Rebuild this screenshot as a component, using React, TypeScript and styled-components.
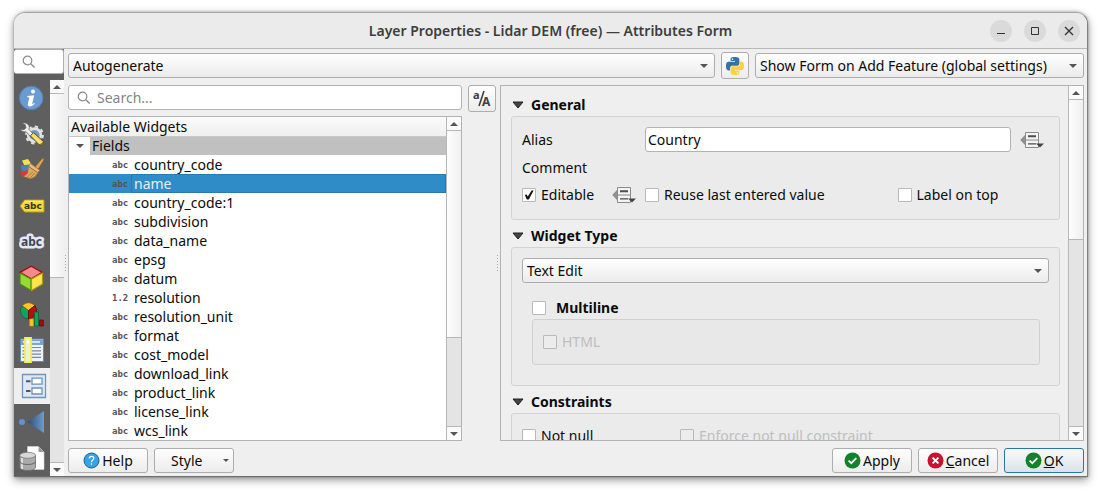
import React from "react";
import styled, { createGlobalStyle, css } from "styled-components";

const GlobalStyle = createGlobalStyle`
  *, *::before, *::after { box-sizing: border-box; }
  body { margin: 0; background: #fff; }
  body, button, input, select {
    font-family: "Noto Sans", "Open Sans", sans-serif;
    font-size: 14px;
    color: #0b0b0b;
  }
  button, select { line-height: 20px; }
`;

/* ---------- shared parts ---------- */

const raised = css`
  border: 1px solid #acaeac;
  border-radius: 3px;
  background: linear-gradient(#fefefe, #ececec);
`;

const Desktop = styled.div`
  height: 100vh;
  padding: 12px 13px 16px 14px;
`;

const Dialog = styled.div`
  height: 100%;
  display: flex;
  flex-direction: column;
  overflow: hidden;
  border-radius: 12px 12px 0 0;
  background: #efefef;
  border: 1px solid #a6a6a6;
  border-right-color: #808080;
  border-bottom-color: #6c6c6c;
  border-left: 0;
  box-shadow: 0 3px 9px rgba(0, 0, 0, 0.42), 0 0 3px rgba(0, 0, 0, 0.3);
`;

const TitleBar = styled.header`
  flex: none;
  height: 36px;
  display: grid;
  grid-template-columns: 1fr auto 1fr;
  align-items: center;
  padding: 0 7px;
  background: #ebebeb;
  border-bottom: 1px solid #b9b9b9;
`;

const Title = styled.h1`
  grid-column: 2;
  margin: 0;
  font-size: 14px;
  line-height: 20px;
  font-weight: 600;
  color: #3d3d3d;
  white-space: nowrap;
`;

const WindowControls = styled.div`
  display: flex;
  justify-content: flex-end;
  gap: 12px;
`;

const WindowButton = styled.button`
  width: 22px;
  height: 22px;
  padding: 0;
  border: 0;
  border-radius: 50%;
  background: #dadada;
  display: grid;
  place-items: center;
`;

const Body = styled.div`
  flex: 1;
  min-height: 0;
  display: flex;
`;

/* ---------- sidebar ---------- */

const Sidebar = styled.aside`
  flex: none;
  width: 50px;
  display: flex;
  flex-direction: column;
  background: #5f5f5f;
`;

const SideSearch = styled.label`
  flex: none;
  height: 25px;
  margin-bottom: 6px;
  display: flex;
  align-items: center;
  gap: 4px;
  padding-left: 8px;
  background: #fff;
  border: 1px solid #b0b0b0;
  border-left: 0;
  border-radius: 3px;
`;

const SideSearchInput = styled.input`
  width: 20px;
  padding: 0;
  border: 0;
  outline: 0;
  background: transparent;
`;

const SideContent = styled.div`
  flex: 1;
  min-height: 0;
  display: flex;
`;

const SideTabs = styled.nav`
  width: 36px;
  display: flex;
  flex-direction: column;
  overflow: hidden;
`;

const SideTab = styled.button<{ $active?: boolean }>`
  flex: none;
  height: 36px;
  padding: 0 0 0 ${(p) => (p.$active ? 4 : 0)}px;
  border: 0;
  display: grid;
  place-items: center;
  background: ${(p) => (p.$active ? "#efefef" : "transparent")};
`;

/* ---------- scrollbar ---------- */

const ScrollTrack = styled.div<{ $border?: boolean }>`
  flex: none;
  width: ${(p) => (p.$border ? 15 : 14)}px;
  display: flex;
  flex-direction: column;
  background: #e4e4e4;
  border-left: ${(p) => (p.$border ? "1px solid #b7b7b7" : "0")};
`;

const ScrollStep = styled.button`
  flex: none;
  height: 13px;
  padding: 0;
  border: 0;
  background: #fafafa;
  display: grid;
  place-items: center;
`;

const ScrollSpace = styled.div`
  flex: 1;
  min-height: 0;
  border-top: 1px solid #b7b7b7;
  border-bottom: 1px solid #b7b7b7;
`;

const ScrollThumb = styled.div<{ $size: number }>`
  height: ${(p) => p.$size}%;
  background: linear-gradient(90deg, #fdfdfd, #f0f0f0);
  border-bottom: 1px solid #b7b7b7;
`;

/* ---------- main area ---------- */

const Main = styled.main`
  flex: 1;
  min-width: 0;
  display: flex;
  flex-direction: column;
  padding: 3px 3px 3px 0;
`;

const TopRow = styled.div`
  flex: none;
  display: flex;
  align-items: center;
  gap: 6px;
  margin-bottom: 6px;
`;

const SelectWrap = styled.div<{ $grow?: boolean; $width?: number }>`
  flex: ${(p) => (p.$grow ? "1" : "none")};
  width: ${(p) => (p.$width ? p.$width + "px" : "auto")};
  min-width: 0;
  display: grid;
  align-items: center;

  & > * { grid-area: 1 / 1; }
  & > svg { justify-self: end; margin-right: 7px; pointer-events: none; }
`;

const Select = styled.select`
  ${raised}
  appearance: none;
  width: 100%;
  height: 25px;
  padding: 0 20px 0 4px;
`;

const IconButton = styled.button`
  ${raised}
  flex: none;
  width: 28px;
  height: 27px;
  padding: 0;
  display: grid;
  place-items: center;
`;

const Columns = styled.div`
  flex: 1;
  min-height: 0;
  display: flex;
`;

const LeftColumn = styled.section`
  flex: 428 1 0;
  min-width: 0;
  display: flex;
  flex-direction: column;
  gap: 4px;
`;

const SearchRow = styled.div`
  flex: none;
  display: flex;
  align-items: flex-start;
  gap: 6px;
`;

const SearchBox = styled.label`
  flex: 1;
  height: 25px;
  display: flex;
  align-items: center;
  gap: 6px;
  padding: 0 8px;
  background: #fff;
  border: 1px solid #b3b3b3;
  border-radius: 3px;
`;

const SearchInput = styled.input`
  flex: 1;
  min-width: 0;
  padding: 0;
  border: 0;
  outline: 0;
  background: transparent;
  &::placeholder { color: #858585; opacity: 1; }
`;

const Tree = styled.div`
  flex: 1;
  min-height: 0;
  margin-right: 34px;
  display: flex;
  background: #fff;
  border: 1px solid #b3b3b3;
`;

const TreeContent = styled.div`
  flex: 1;
  min-width: 0;
  overflow: hidden;
`;

const TreeHeader = styled.div`
  height: 20px;
  padding-left: 2px;
  line-height: 20px;
  background: linear-gradient(#fbfbfb, #efefef);
  border-bottom: 1px solid #c8c8c8;
`;

const TreeGroup = styled.div`
  display: flex;
  align-items: center;
  gap: 6px;
  height: 18px;
  padding-left: 7px;
`;

const TreeGroupLabel = styled.span`
  flex: 1;
  height: 18px;
  padding-left: 2px;
  line-height: 18px;
  background: #c0c0c0;
`;

const TreeList = styled.ul`
  margin: 0;
  padding: 0;
  list-style: none;
`;

const TreeItem = styled.li<{ $selected?: boolean }>`
  height: 19px;
  display: flex;
  align-items: center;
  gap: 3px;
  padding-left: 43px;
  line-height: 19px;
  white-space: nowrap;
  color: ${(p) => (p.$selected ? "#e4f0f8" : "inherit")};
  background: ${(p) => (p.$selected ? "#308cc6" : "transparent")};
`;

const FieldName = styled.span<{ $focused?: boolean }>`
  flex: 1;
  padding-left: 3px;
  box-shadow: ${(p) => (p.$focused ? "inset 0 0 0 1px #2a7ab0" : "none")};
`;

const FieldType = styled.span`
  width: 16px;
  font: bold 9px/16px "DejaVu Sans Mono", monospace;
  color: #545454;
`;

const Splitter = styled.div`
  flex: none;
  width: 4px;
  display: grid;
  place-items: center;
`;

const Panel = styled.section`
  flex: 582 1 0;
  min-width: 0;
  display: flex;
  border: 1px solid #b3b3b3;
`;

const PanelContent = styled.div`
  flex: 1;
  min-width: 0;
  overflow: hidden;
  padding: 8px 8px 0 10px;
`;

const GroupTitle = styled.button`
  display: flex;
  align-items: center;
  gap: 7px;
  width: 100%;
  height: 22px;
  padding: 0 0 0 1px;
  border: 0;
  background: transparent;
  font-weight: 700;
`;

const Group = styled.div`
  margin-bottom: 5px;
  padding: 10px;
  border: 1px solid #d3d3d3;
  border-radius: 3px;
  background: #ebebeb;
`;

const AliasRow = styled.div`
  display: grid;
  grid-template-columns: 123px 1fr 38px;
  align-items: center;
`;

const TextInput = styled.input`
  height: 25px;
  min-width: 0;
  padding: 0 2px;
  border: 1px solid #b3b3b3;
  border-radius: 3px;
  background: #fff;
`;

const CommentRow = styled.div`
  height: 32px;
  line-height: 32px;
`;

const OptionRow = styled.div`
  display: grid;
  grid-template-columns: 90px 33px 5fr 3fr;
  align-items: center;
  height: 22px;
  margin-bottom: 3px;
`;

const OverrideButton = styled.button`
  width: 24px;
  height: 20px;
  padding: 0;
  border: 0;
  background: transparent;
  display: grid;
  place-items: center;
`;

const OverrideCell = styled.div<{ $spaced?: boolean }>`
  display: flex;
  padding-left: ${(p) => (p.$spaced ? 9 : 0)}px;
`;

const CheckLabel = styled.label<{ $disabled?: boolean; $bold?: boolean }>`
  display: flex;
  align-items: center;
  gap: ${(p) => (p.$bold ? 10 : 5)}px;
  line-height: 20px;
  white-space: nowrap;
  font-weight: ${(p) => (p.$bold ? 700 : 400)};
  color: ${(p) => (p.$disabled ? "#bebebe" : "inherit")};
`;

const CheckInput = styled.input`
  appearance: none;
  flex: none;
  width: 14px;
  height: 14px;
  margin: 0;
  border: 1px solid #b9b9b9;
  border-radius: 1px;
  background: #fff;
  display: grid;
  place-items: center;

  &:disabled { background: #ececec; }
  &:checked::after {
    content: "";
    width: 10px;
    height: 10px;
    background: #111;
    clip-path: polygon(8% 48%, 26% 44%, 38% 66%, 76% 4%, 96% 4%, 48% 96%, 28% 96%);
  }
`;

const NestedTitle = styled.div`
  padding: 15px 10px 0;
  height: 36px;
`;

const NestedGroup = styled.div`
  margin: 0 9px 10px 10px;
  padding: 12px 10px;
  height: 46px;
  border: 1px solid #d0d0d0;
  border-radius: 3px;
  background: #e8e8e8;
`;

const ConstraintRow = styled.div`
  display: grid;
  grid-template-columns: 158px 1fr;
  height: 24px;
`;

const Footer = styled.footer`
  flex: none;
  display: flex;
  gap: 6px;
  padding-top: 7px;
`;

const FooterSpace = styled.div`
  flex: 1;
`;

const PushButton = styled.button<{ $primary?: boolean }>`
  ${raised}
  width: 80px;
  height: 25px;
  padding: 0;
  display: flex;
  align-items: center;
  justify-content: center;
  gap: 2px;
  ${(p) =>
    p.$primary &&
    css`
      border-color: #2a76a8;
      background: linear-gradient(#f7fafb, #dbe3e8);
    `}
`;

const MenuButton = styled(PushButton)`
  justify-content: space-between;
  padding: 0 4px 0 16px;
`;

/* ---------- drawings ---------- */

const Arrow = ({ up, small }: { up?: boolean; small?: boolean }) => (
  <svg width={small ? 6 : 8} height={small ? 3 : 4} viewBox="0 0 8 4" aria-hidden="true">
    <path d={up ? "M0 4L4 0L8 4Z" : "M0 0H8L4 4Z"} fill="#555" />
  </svg>
);

const GroupArrow = () => (
  <svg width="12" height="8" viewBox="0 0 12 8" aria-hidden="true">
    <path d="M1 1H11L6 7Z" fill="#444" stroke="#222" strokeLinejoin="round" />
  </svg>
);

const Magnifier = () => (
  <svg width="14" height="14" viewBox="0 0 14 14" fill="none" stroke="#8b8b8b" aria-hidden="true">
    <circle cx="5.5" cy="5.5" r="4.3" strokeWidth="1.2" />
    <path d="M8.7 8.7L12.7 12.5" strokeWidth="1.5" />
  </svg>
);

const Grip = () => (
  <svg width="2" height="16" viewBox="0 0 2 16" aria-hidden="true">
    {[0, 3, 6, 9, 12, 15].map((y) => (
      <rect key={y} x="0" y={y} width="1" height="1" fill="#a5a5a5" />
    ))}
  </svg>
);

const pySnake =
  "M14.25.18l.9.2.73.26.59.3.45.32.34.34.25.34.16.33.1.3.04.26.02.2-.01.13V8.5l-.05.63-.13.55-.21.46-.26.38-.3.31-.33.25-.35.19-.35.14-.33.1-.3.07-.26.04-.21.02H8.77l-.69.05-.59.14-.5.22-.41.27-.33.32-.27.35-.2.36-.15.37-.1.35-.07.32-.04.27-.02.21v3.06H3.17l-.21-.03-.28-.07-.32-.12-.35-.18-.36-.26-.36-.36-.35-.46-.32-.59-.28-.73-.21-.88-.14-1.05-.05-1.23.06-1.22.16-1.04.24-.87.32-.71.36-.57.4-.44.42-.33.42-.24.4-.16.36-.1.32-.05.24-.01h.16l.06.01h8.16v-.83H6.18l-.01-2.75-.02-.37.05-.34.11-.31.17-.28.25-.26.31-.23.38-.2.44-.18.51-.15.58-.12.64-.1.71-.06.77-.04.84-.02 1.27.05zm-6.3 1.98l-.23.33-.08.41.08.41.23.34.33.22.41.09.41-.09.33-.22.23-.34.08-.41-.08-.41-.23-.33-.33-.22-.41-.09-.41.09z";

const PythonLogo = () => (
  <svg width="18" height="18" viewBox="0 0 24 24" aria-hidden="true">
    <path d={pySnake} fill="#3871a3" />
    <path d={pySnake} fill="#ffd140" transform="rotate(180 12 12)" />
  </svg>
);

const CaseIcon = () => (
  <svg width="20" height="24" viewBox="0 0 20 24" aria-hidden="true">
    <text x="1" y="12" fontFamily="Noto Sans" fontWeight="700" fontSize="11" fill="#3c4143">a</text>
    <path d="M12 4L7 19" stroke="#3c4143" strokeWidth="1.6" />
    <text x="10" y="19" fontFamily="Noto Sans" fontWeight="700" fontSize="12" fill="#3c4143">A</text>
  </svg>
);

const OverrideIcon = () => (
  <svg width="24" height="18" viewBox="0 0 24 18" aria-hidden="true">
    <path d="M6 3.5V14.5L0.8 9Z" fill="#8f9396" stroke="#777" strokeWidth="0.8" />
    <path d="M5.5 1.5H18.5V16.5H5.5Z" fill="#f3f3f3" stroke="#8a8a8a" />
    <path d="M5.5 9H18.5" stroke="#8a8a8a" />
    <path d="M8 5.3H16" stroke="#4d4d4d" strokeWidth="2" />
    <path d="M8 12.8H16" stroke="#4d4d4d" strokeWidth="1.2" />
    <path d="M16 12.5H24L20 16.5Z" fill="#444" />
  </svg>
);

const StatusIcon = ({ kind }: { kind: "help" | "ok" | "cancel" }) => (
  <svg width="17" height="17" viewBox="0 0 17 17" aria-hidden="true">
    <circle
      cx="8.5"
      cy="8.5"
      r={kind === "help" ? 7.5 : 8}
      fill={kind === "help" ? "#36a3e6" : kind === "ok" ? "#12832a" : "#c9122f"}
      stroke={kind === "help" ? "#1f5f8b" : "none"}
    />
    {kind === "help" && (
      <g fill="none" stroke="#fff" strokeWidth="1.2">
        <path d="M6.3 6.4C6.3 3.6 10.8 3.6 10.8 6.3C10.8 8 8.5 8 8.5 10.2" />
        <path d="M8.5 11.4V12.8" />
      </g>
    )}
    {kind === "ok" && <path d="M4.6 8.6L7.3 11.2L12.3 6.2" fill="none" stroke="#fff" strokeWidth="1.8" />}
    {kind === "cancel" && <path d="M5.6 5.6L11.4 11.4M11.4 5.6L5.6 11.4" stroke="#fff" strokeWidth="2" />}
  </svg>
);

const Svg = styled.svg.attrs({ width: 26, height: 26, viewBox: "0 0 26 26", "aria-hidden": true })`
  display: block;
`;

const InfoIcon = () => (
  <Svg>
    <circle cx="12.2" cy="13" r="11.7" fill="#6a9bd3" stroke="#5285bd" />
    <circle cx="14" cy="6.6" r="2" fill="#fff" />
    <path d="M8.5 11L15.2 10.2L13.2 18.4Q13.2 19.6 15.4 18.1L15.7 19Q13 21.8 10.2 21.4Q8.2 20.8 9 18.1L10.4 12.5L8.3 12.2Z" fill="#fff" />
  </Svg>
);

const ToolsIcon = () => (
  <Svg>
    <circle cx="15.5" cy="14" r="6.4" fill="#6f9ccb" stroke="#e2e2e2" strokeWidth="2.6" />
    <circle cx="15.5" cy="14" r="8.4" fill="none" stroke="#e2e2e2" strokeWidth="2" strokeDasharray="3.3 3.3" />
    <path d="M3 2.2Q7.5.8 9.8 4.3Q10.8 6.4 9.8 8.2L15.2 14L12.5 16.5L7.2 10.8Q3.4 12 1 8.2L5 8.8L7 6.8L6.2 3.6Z" fill="#f1f1f1" stroke="#666" strokeWidth=".8" />
    <path d="M11.3 14.8L14.7 11.6L24.6 20.7L22.8 24.2L20 23.7Z" fill="#f2d767" stroke="#55440d" strokeWidth="1" />
    <path d="M13.5 14.3L22 22.2" stroke="#fff0a0" strokeWidth="1" />
    <path d="M24.6 20.7L22.8 24.2L20 23.7Z" fill="#8b7327" />
  </Svg>
);

const BrushIcon = () => (
  <Svg>
    <path d="M3 3.5L9 2L13 8L6 10Z" fill="#f6df53" />
    <path d="M1.5 8.5L10 7.5L12 14L3 15Z" fill="#4c80c3" />
    <path d="M0.5 14.5L10 13L12 18L3 19.5Z" fill="#d83a36" />
    <path d="M16 10L22.5 2.2Q24.5.8 25 2.8L19 12.5Z" fill="#d9a55c" stroke="#8d6022" strokeWidth=".7" />
    <path d="M11.3 6.3L20.8 13.2L18.8 15.7L9.5 9.5Z" fill="#e9bb78" stroke="#95682c" strokeWidth=".7" />
    <path d="M9.5 9.5L18.8 15.7Q17 20.6 11.5 21.7L4.5 19.6L8.5 16.4Z" fill="#dba965" stroke="#9b6d30" strokeWidth=".7" />
    <path d="M8 20.2L14 15M11 21L16 16" stroke="#ab7737" strokeWidth=".8" />
  </Svg>
);

const LabelTagIcon = () => (
  <Svg>
    <path d="M1 13L5.6 7H25V19H5.6Z" fill="#f3da3e" stroke="#b99a14" />
    <path d="M5.7 8.2H24" stroke="#fff29d" />
    <text x="5" y="16" fontFamily="DejaVu Sans" fontWeight="700" fontSize="9" fill="#38340f">abc</text>
  </Svg>
);

const MaskIcon = () => (
  <Svg>
    <text x="2" y="17" fontFamily="Noto Sans" fontWeight="700" fontSize="12" fill="#41434a" stroke="#e3e8fb" strokeWidth="5" strokeLinejoin="round" paintOrder="stroke">abc</text>
  </Svg>
);

const CubeIcon = () => (
  <Svg strokeLinejoin="round">
    <path d="M12.2 1.2L23.3 7.4L12.2 13.8L1 7.4Z" fill="#f58a8d" stroke="#a30b12" strokeWidth="1.3" />
    <path d="M1 8L12 14V25.5L1 19Z" fill="#93dc35" stroke="#4a8a12" strokeWidth="1.2" />
    <path d="M23.5 8L12.5 14V25.5L23.5 19Z" fill="#fbe74b" stroke="#b49613" strokeWidth="1.2" />
  </Svg>
);

const DiagramIcon = () => (
  <Svg>
    <path d="M9.5 9.5L9.5 18Q1.7 17.2 1.5 9.4Q1.7 6.6 3.2 4.7Z" fill="#11a25b" stroke="#075f32" strokeWidth=".7" />
    <path d="M9.5 9.5L3.2 4.5Q9.2-1.2 16 4.5Z" fill="#fbc526" stroke="#896206" strokeWidth=".7" />
    <path d="M9.5 9.5L16 4.5Q21 13 11 17.8L9.5 18Z" fill="#b60e12" stroke="#610407" strokeWidth=".7" />
    <path d="M10.7 18H14.4V25H10.7Z" fill="#fbc526" stroke="#d39610" strokeWidth=".7" />
    <path d="M15.5 11H19.5V25H15.5Z" fill="#11a25b" stroke="#075f32" strokeWidth=".7" />
    <path d="M20.5 19H24.3V25H20.5Z" fill="#a10d10" stroke="#610407" strokeWidth=".7" />
  </Svg>
);

const FieldsIcon = () => (
  <Svg>
    <path d="M1.5 2H24.5V24.5H1.5Z" fill="#eef2f7" stroke="#638bb8" />
    <path d="M2 2.5H24V8H2Z" fill="#7ca4cf" />
    <path d="M4 5H21" stroke="#d6e4f3" strokeWidth="2" />
    <path d="M3.5 10.5H22M3.5 13.8H22M3.5 17.1H22M3.5 20.4H22" stroke="#78899b" strokeWidth="1.2" />
    <path d="M6 .8H12V25.2H6Z" fill="#edeedb" stroke="#f3ef4c" strokeWidth="1.8" />
    <circle cx="9" cy="5" r="1.3" fill="#fff" />
  </Svg>
);

const FormIcon = () => (
  <Svg>
    <path d="M1.5 1.5H24.5V24.5H1.5Z" fill="#dfe8f2" stroke="#7194bb" strokeWidth="1.3" />
    <path d="M11 5.2H21V11.2H11ZM11 15H21V21H11Z" fill="#fff" stroke="#6c91bc" strokeWidth="1.3" />
    <path d="M5 8.2H9.5M5 18H9.5" stroke="#47566a" strokeWidth="2" />
  </Svg>
);

const JoinsIcon = () => (
  <Svg>
    <defs>
      <linearGradient id="cone">
        <stop offset="0" stopColor="#294d74" />
        <stop offset="1" stopColor="#6c9cd1" />
      </linearGradient>
    </defs>
    <path d="M8 13L25 2V24Z" fill="url(#cone)" />
    <circle cx="3" cy="13" r="3" fill="#6392c7" />
  </Svg>
);

const StorageIcon = () => (
  <Svg>
    <path d="M8.5 1.5H19.5L25 7V24.5H8.5Z" fill="#fff" stroke="#d4d4d4" strokeWidth=".6" />
    <path d="M19.5 1.5L25 7H19.5Z" fill="#9b9b9b" />
    <path d="M.8 10.5V22.5Q2 25.5 8.7 25.5Q15.5 25.5 16.5 22.5V10.5Z" fill="#aaa" stroke="#6d6d6d" strokeWidth=".8" />
    <path d="M3 13V24" stroke="#ddd" strokeWidth="2" />
    <ellipse cx="8.7" cy="10.3" rx="7.9" ry="3" fill="#d7d7d7" stroke="#777" strokeWidth=".8" />
    <path d="M.8 16.5Q2 19.5 8.7 19.5Q15.5 19.5 16.5 16.5" fill="none" stroke="#666" />
  </Svg>
);

/* ---------- data ---------- */

const tabs = [
  { name: "Information", Icon: InfoIcon },
  { name: "Source", Icon: ToolsIcon },
  { name: "Symbology", Icon: BrushIcon },
  { name: "Labels", Icon: LabelTagIcon },
  { name: "Masks", Icon: MaskIcon },
  { name: "3D View", Icon: CubeIcon },
  { name: "Diagrams", Icon: DiagramIcon },
  { name: "Fields", Icon: FieldsIcon },
  { name: "Attributes Form", Icon: FormIcon },
  { name: "Joins", Icon: JoinsIcon },
  { name: "Auxiliary Storage", Icon: StorageIcon },
];

const fields = [
  "country_code",
  "name",
  "country_code:1",
  "subdivision",
  "data_name",
  "epsg",
  "datum",
  "resolution",
  "resolution_unit",
  "format",
  "cost_model",
  "download_link",
  "product_link",
  "license_link",
  "wcs_link",
];

/* ---------- composed parts ---------- */

const Scrollbar = ({ size, border }: { size: number; border?: boolean }) => (
  <ScrollTrack $border={border}>
    <ScrollStep aria-label="Scroll up"><Arrow up /></ScrollStep>
    <ScrollSpace><ScrollThumb $size={size} /></ScrollSpace>
    <ScrollStep aria-label="Scroll down"><Arrow /></ScrollStep>
  </ScrollTrack>
);

interface ComboProps {
  label: string;
  value: string;
  grow?: boolean;
  width?: number;
}

const Combo = ({ label, value, grow, width }: ComboProps) => (
  <SelectWrap $grow={grow} $width={width}>
    <Select aria-label={label} defaultValue={value}>
      <option>{value}</option>
    </Select>
    <Arrow />
  </SelectWrap>
);

interface CheckProps {
  label: string;
  checked?: boolean;
  disabled?: boolean;
  bold?: boolean;
}

const Check = ({ label, checked, disabled, bold }: CheckProps) => (
  <CheckLabel $disabled={disabled} $bold={bold}>
    <CheckInput type="checkbox" defaultChecked={checked} disabled={disabled} />
    {label}
  </CheckLabel>
);

export default function App() {
  return (
    <Desktop>
      <GlobalStyle />
      <Dialog role="dialog" aria-labelledby="title">
        <TitleBar>
          <Title id="title">Layer Properties - Lidar DEM (free) — Attributes Form</Title>
          <WindowControls>
            <WindowButton aria-label="Minimize">
              <svg width="10" height="10"><path d="M1 7.5H9" stroke="#333" /></svg>
            </WindowButton>
            <WindowButton aria-label="Maximize">
              <svg width="10" height="10"><path d="M1.5 1.5H8.5V8.5H1.5Z" fill="none" stroke="#333" /></svg>
            </WindowButton>
            <WindowButton aria-label="Close">
              <svg width="10" height="10"><path d="M1 1L9 9M9 1L1 9" stroke="#333" strokeWidth="1.3" /></svg>
            </WindowButton>
          </WindowControls>
        </TitleBar>
        <Body>
          <Sidebar>
            <SideSearch>
              <Magnifier />
              <SideSearchInput aria-label="Search settings" />
            </SideSearch>
            <SideContent>
              <SideTabs>
                {tabs.map(({ name, Icon }) => (
                  <SideTab key={name} aria-label={name} $active={name === "Attributes Form"}>
                    <Icon />
                  </SideTab>
                ))}
              </SideTabs>
              <Scrollbar size={50} />
            </SideContent>
          </Sidebar>
          <Splitter><Grip /></Splitter>
          <Main>
            <TopRow>
              <Combo label="Form layout" value="Autogenerate" grow />
              <IconButton aria-label="Python init function"><PythonLogo /></IconButton>
              <Combo label="Show form" value="Show Form on Add Feature (global settings)" width={329} />
            </TopRow>
            <Columns>
              <LeftColumn>
                <SearchRow>
                  <SearchBox>
                    <Magnifier />
                    <SearchInput aria-label="Search widgets" placeholder="Search..." />
                  </SearchBox>
                  <IconButton aria-label="Toggle alias"><CaseIcon /></IconButton>
                </SearchRow>
                <Tree>
                  <TreeContent>
                    <TreeHeader>Available Widgets</TreeHeader>
                    <TreeGroup>
                      <Arrow />
                      <TreeGroupLabel>Fields</TreeGroupLabel>
                    </TreeGroup>
                    <TreeList>
                      {fields.map((name) => (
                        <TreeItem key={name} $selected={name === "name"}>
                          <FieldType>{name === "resolution" ? "1.2" : "abc"}</FieldType>
                          <FieldName $focused={name === "name"}>{name}</FieldName>
                        </TreeItem>
                      ))}
                    </TreeList>
                  </TreeContent>
                  <Scrollbar size={70} border />
                </Tree>
              </LeftColumn>
              <Splitter><Grip /></Splitter>
              <Panel>
                <PanelContent>
                  <GroupTitle><GroupArrow />General</GroupTitle>
                  <Group>
                    <AliasRow>
                      <label htmlFor="alias">Alias</label>
                      <TextInput id="alias" defaultValue="Country" />
                      <OverrideCell $spaced>
                        <OverrideButton aria-label="Alias override"><OverrideIcon /></OverrideButton>
                      </OverrideCell>
                    </AliasRow>
                    <CommentRow>Comment</CommentRow>
                    <OptionRow>
                      <Check label="Editable" checked />
                      <OverrideCell>
                        <OverrideButton aria-label="Editable override"><OverrideIcon /></OverrideButton>
                      </OverrideCell>
                      <Check label="Reuse last entered value" />
                      <Check label="Label on top" />
                    </OptionRow>
                  </Group>
                  <GroupTitle><GroupArrow />Widget Type</GroupTitle>
                  <Group>
                    <Combo label="Widget type" value="Text Edit" />
                    <NestedTitle><Check label="Multiline" bold /></NestedTitle>
                    <NestedGroup><Check label="HTML" disabled /></NestedGroup>
                  </Group>
                  <GroupTitle><GroupArrow />Constraints</GroupTitle>
                  <Group>
                    <ConstraintRow>
                      <Check label="Not null" />
                      <Check label="Enforce not null constraint" disabled />
                    </ConstraintRow>
                  </Group>
                </PanelContent>
                <Scrollbar size={43} border />
              </Panel>
            </Columns>
            <Footer>
              <PushButton><StatusIcon kind="help" />Help</PushButton>
              <MenuButton>Style<Arrow small /></MenuButton>
              <FooterSpace />
              <PushButton><StatusIcon kind="ok" />Apply</PushButton>
              <PushButton><StatusIcon kind="cancel" /><span><u>C</u>ancel</span></PushButton>
              <PushButton $primary><StatusIcon kind="ok" /><span><u>O</u>K</span></PushButton>
            </Footer>
          </Main>
        </Body>
      </Dialog>
    </Desktop>
  );
}
